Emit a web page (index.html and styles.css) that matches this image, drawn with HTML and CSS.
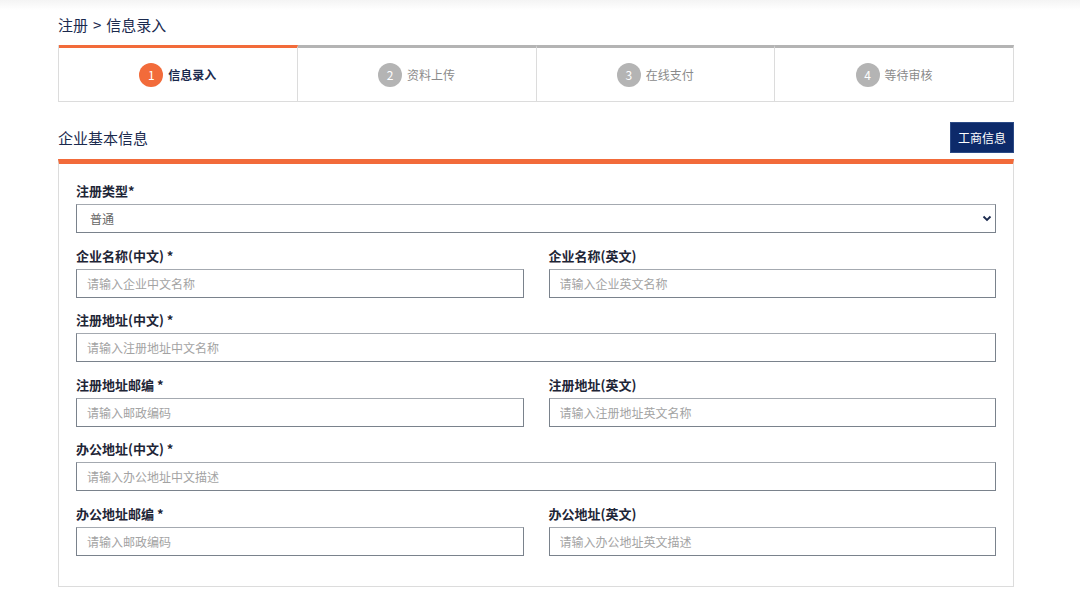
FILE: index.html
```html
<!DOCTYPE html>
<html lang="zh-CN">
<head>
<meta charset="utf-8">
<title>注册 - 信息录入</title>
<link rel="stylesheet" href="styles.css">
</head>
<body>
<div class="topbar"></div>
<div class="page">
  <div class="breadcrumb">注册<span class="sep">&gt;</span>信息录入</div>

  <div class="steps">
    <div class="step active"><span class="num">1</span><span class="label">信息录入</span></div>
    <div class="step"><span class="num">2</span><span class="label">资料上传</span></div>
    <div class="step"><span class="num">3</span><span class="label">在线支付</span></div>
    <div class="step"><span class="num">4</span><span class="label">等待审核</span></div>
  </div>

  <div class="section-head">
    <div class="section-title">企业基本信息</div>
    <button class="btn-navy" type="button">工商信息</button>
  </div>

  <div class="panel">
    <div class="field full">
      <label class="flabel">注册类型*</label>
      <div class="select-wrap">
        <select class="finput select"><option>普通</option></select>
        <svg class="chev" width="10" height="7" viewBox="0 0 10 7"><path d="M1.5 1.5 L5 5 L8.5 1.5" fill="none" stroke="#1b2a4e" stroke-width="1.8"/></svg>
      </div>
    </div>
    <div class="row">
      <div class="field">
        <label class="flabel">企业名称(中文) *</label>
        <input class="finput" placeholder="请输入企业中文名称">
      </div>
      <div class="field">
        <label class="flabel">企业名称(英文)</label>
        <input class="finput" placeholder="请输入企业英文名称">
      </div>
    </div>
    <div class="field full">
      <label class="flabel">注册地址(中文) *</label>
      <input class="finput" placeholder="请输入注册地址中文名称">
    </div>
    <div class="row">
      <div class="field">
        <label class="flabel">注册地址邮编 *</label>
        <input class="finput" placeholder="请输入邮政编码">
      </div>
      <div class="field">
        <label class="flabel">注册地址(英文)</label>
        <input class="finput" placeholder="请输入注册地址英文名称">
      </div>
    </div>
    <div class="field full">
      <label class="flabel">办公地址(中文) *</label>
      <input class="finput" placeholder="请输入办公地址中文描述">
    </div>
    <div class="row">
      <div class="field">
        <label class="flabel">办公地址邮编 *</label>
        <input class="finput" placeholder="请输入邮政编码">
      </div>
      <div class="field">
        <label class="flabel">办公地址(英文)</label>
        <input class="finput" placeholder="请输入办公地址英文描述">
      </div>
    </div>
  </div>
</div>
</body>
</html>
```
FILE: styles.css
```css
* { box-sizing: border-box; }
html, body { margin: 0; padding: 0; background: #fff; }
body {
  font-family: "Noto Sans CJK SC", "Noto Sans", sans-serif;
  color: #1b2a4e;
}
.topbar {
  height: 10px;
  background: linear-gradient(#f4f4f4, #fff);
}
.page {
  width: 956px;
  margin-left: 58px;
}
.breadcrumb {
  font-size: 15px;
  line-height: 20px;
  height: 20px;
  margin-top: 5px;
  color: #1b2a4e;
}
.sep {
  margin: 0 5px;
}
.steps {
  margin-top: 10px;
  display: flex;
  border-left: 1px solid #dcdcdc;
  border-bottom: 1px solid #dcdcdc;
}
.step {
  flex: 1;
  height: 56px;
  border-top: 3px solid #b4b4b4;
  border-right: 1px solid #dcdcdc;
  display: flex;
  align-items: center;
  justify-content: center;
  gap: 5px;
  font-size: 12px;
  color: #8a8a8a;
}
.step.active {
  border-top-color: #f26b3a;
  color: #1b2a4e;
  font-weight: bold;
}
.num {
  width: 24px;
  height: 24px;
  border-radius: 50%;
  background: #b4b4b4;
  color: #fff;
  font-weight: normal;
  display: flex;
  align-items: center;
  justify-content: center;
  font-size: 12px;
}
.step.active .num { background: #f26b3a; }
.section-head {
  margin-top: 20px;
  display: flex;
  justify-content: space-between;
  align-items: center;
  height: 31px;
}
.section-title {
  font-size: 15px;
  line-height: 20px;
  color: #1b2a4e;
}
.btn-navy {
  width: 64px;
  height: 31px;
  background: #0d2a6a;
  border: 1px solid #2b4a86;
  color: #fff;
  font-family: inherit;
  font-size: 12px;
  padding: 0;
}
.panel {
  margin-top: 6px;
  border-top: 5px solid #f26b3a;
  border-left: 1px solid #dcdcdc;
  border-right: 1px solid #dcdcdc;
  border-bottom: 1px solid #dcdcdc;
  padding: 17px 17px 30px;
  display: flex;
  flex-direction: column;
  gap: 12.5px;
}
.row {
  display: grid;
  grid-template-columns: 1fr 1fr;
  column-gap: 25px;
}
.field {
  display: flex;
  flex-direction: column;
}
.flabel {
  font-size: 13px;
  font-weight: bold;
  line-height: 20px;
  margin-bottom: 3px;
  color: #1e2536;
}
.finput {
  height: 29px;
  width: 100%;
  border: 1px solid #7a828c;
  border-top-color: #a4a9b0;
  background: #fff;
  padding: 0 10px;
  font-family: inherit;
  font-size: 12px;
  color: #333;
  border-radius: 0;
  outline: none;
}
.finput::placeholder { color: #a3a3a3; }
.select-wrap { position: relative; }
.select {
  -webkit-appearance: none;
  appearance: none;
  color: #666;
  padding-left: 13px;
}
.chev {
  position: absolute;
  right: 4px;
  top: 11px;
  pointer-events: none;
}
```
